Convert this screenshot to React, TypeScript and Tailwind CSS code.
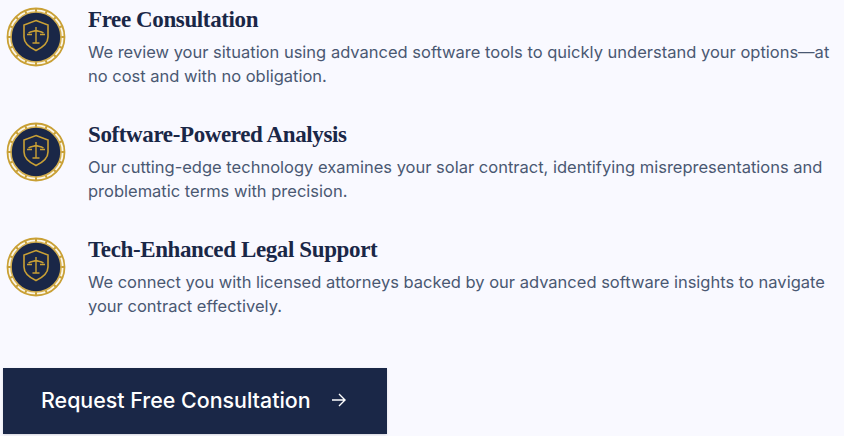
const items = [
  { t: "Free Consultation", a: "We review your situation using advanced software tools to quickly understand your options—at", b: "no cost and with no obligation." },
  { t: "Software-Powered Analysis", a: "Our cutting-edge technology examines your solar contract, identifying misrepresentations and", b: "problematic terms with precision." },
  { t: "Tech-Enhanced Legal Support", a: "We connect you with licensed attorneys backed by our advanced software insights to navigate", b: "your contract effectively." },
];

function Badge() {
  const spokes = Array.from({ length: 16 }, (_, i) => (i * 360) / 16);
  return (
    <svg width="60" height="60" viewBox="0 0 60 60" className="shrink-0">
      <circle cx="30" cy="30" r="28.5" fill="#fbf6e6" stroke="#c9a035" strokeWidth="1.8" />
      {spokes.map((d) => (
        <rect key={d} x="29" y="2" width="2" height="5" fill="#c9a035" transform={`rotate(${d} 30 30)`} />
      ))}
      <circle cx="30" cy="30" r="25" fill="#1a2747" stroke="#d3ae4e" strokeWidth="1.6" />
      <path d="M30 13.5 L42 18 V30 C42 36 36.5 40.5 30 43.5 C23.5 40.5 18 36 18 30 V18 Z" fill="none" stroke="#c9a035" strokeWidth="1.6" />
      <path d="M30 20 V36 M26.5 36 H33.5 M22.5 26 C25 24 28 24.5 30 23.5 C32 24.5 35 24 37.5 26 M21 27.5 H26 M34 27.5 H39" fill="none" stroke="#c9a035" strokeWidth="1.4" />
    </svg>
  );
}

export default function App() {
  return (
    <div className="w-[844px] h-[436px] overflow-hidden bg-[#f9f9ff] pt-[7px] font-['Inter',sans-serif]">
      <div className="flex flex-col gap-[55px] pl-[6px]">
        {items.map((it) => (
          <div key={it.t} className="flex h-[60px] gap-[22px]">
            <Badge />
            <div>
              <h3 className="-mt-[7px] font-['Liberation_Serif',serif] font-bold text-[23px] tracking-[-0.38px] leading-[28px] pt-[6px] text-[#1a2747] whitespace-nowrap">{it.t}</h3>
              <p className="mt-[6px] text-[16.5px] leading-[24px] text-[#4a5872] whitespace-nowrap">{it.a}<br />{it.b}</p>
            </div>
          </div>
        ))}
      </div>
      <div className="pl-[3px] pt-[71px]">
        <button className="flex h-[66px] w-[384px] items-center gap-[19px] bg-[#1a2747] pl-[38px] pb-[2px] text-[21.4px] font-medium text-white shadow-sm">
          <span>Request Free Consultation</span>
          <svg width="16" height="16" viewBox="0 0 16 16" fill="none" stroke="currentColor" strokeWidth="1.4">
            <path d="M2 8 H15 M9 2 L15 8 L9 14" />
          </svg>
        </button>
      </div>
    </div>
  );
}
